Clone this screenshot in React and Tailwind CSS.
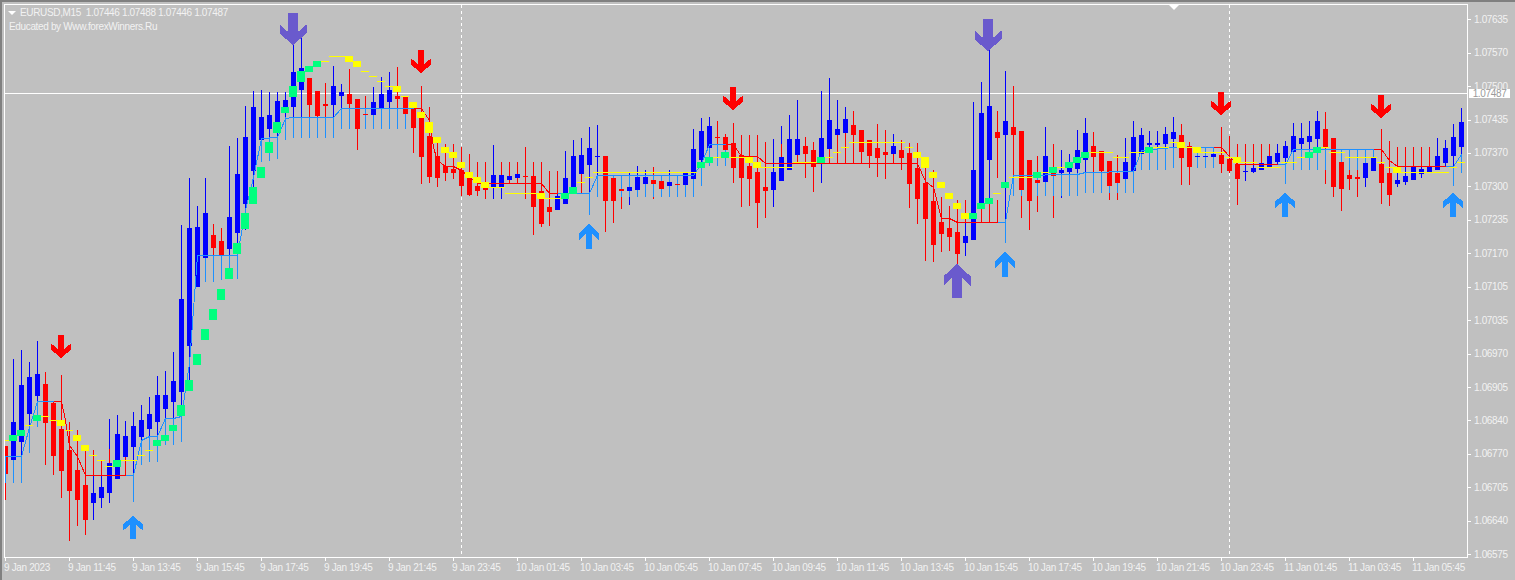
const C = [
['r',446,446,474,500,'d',456,482],['b',359,422,460,483,'d',456,483],['b',350,385,442,483,'d',456,483],['b',362,377,414,453,'d',427,453],['b',341,374,396,427,'d',401,427],
['r',372,384,423,465],['r',402,403,456,475],['r',375,429,471,498],['r',422,450,491,541],['r',430,470,500,526],
['r',445,485,520,535],['b',450,493,503,520,'r',450,475],['b',460,487,498,508,'r',460,475],['b',419,463,493,503,'r',449,475],['b',415,434,479,479,'r',460,475],
['b',421,436,457,475,'r',449,475],['b',412,426,447,502,'d',475,502],['b',405,420,437,465,'d',440,465],['b',397,414,429,462,'d',436,462],['b',376,395,422,462,'d',436,462],
['b',371,395,409,445,'d',418,445],['b',352,381,402,445,'d',418,445],['b',225,299,392,442,'d',416,442],['b',178,228,346,390],['b',206,227,287,281,'d',255,281],
['b',178,213,258,282,'d',255,282],['r',224,235,248,282,'d',255,282],['r',228,241,256,280,'d',255,280],['b',146,217,249,279,'d',255,279],['b',138,174,233,279,'d',255,279],
['b',106,137,204,230],['b',91,107,171,190],['b',90,117,140,162,'d',138,162],['b',92,115,129,161,'d',137,161],['b',92,101,122,159,'d',137,159],
['b',92,100,108,140,'d',117,140],['b',33,72,107,138,'d',117,138],['b',36,68,90,138,'d',117,138],['r',78,78,105,138,'d',117,138],['r',91,91,116,138,'d',117,138],
['r',83,104,106,138,'d',117,138],['b',66,86,105,138,'d',117,138],['b',84,92,96,129,'d',108,129],['r',69,94,104,129,'d',108,129],['r',99,99,129,150,'d',108,129],
['r',96,114,115,129,'d',108,129],['b',87,102,115,129,'d',108,129],['b',77,94,109,129,'d',108,129],['b',72,90,102,129,'d',108,129],['r',67,96,99,129,'d',108,129],
['r',97,97,114,129,'d',108,129],['r',105,108,128,153],['r',86,118,157,184],['r',107,136,177,183],['r',143,156,178,187],
['r',144,166,173,181],['r',144,169,173,179],['r',147,170,186,196],['r',154,178,195,196],['r',162,186,191,196],
['r',162,185,190,199],['b',145,175,187,199],['b',162,175,187,199,'r',162,183],['b',162,176,180,183,'r',162,183],['b',162,174,178,183,'r',162,183],
['r',147,176,177,199],['r',162,176,207,235],['r',162,191,224,227],['r',171,207,212,226],['b',171,196,210,210,'r',171,193],
['b',151,178,204,204],['b',140,156,189,189],['b',138,155,174,193,'r',174,193],['b',127,148,165,215,'d',193,215],['b',125,156,157,197,'d',175,197],
['r',156,156,201,232],['r',175,178,201,223,'d',175,197],['r',175,189,191,209,'d',175,197],['b',173,187,191,205,'d',175,197],['b',166,177,190,197,'d',175,197],
['b',170,177,184,197,'d',175,197],['r',167,180,184,199,'d',175,197],['r',175,181,189,197,'d',175,197],['b',170,182,186,197,'d',175,197],['r',175,184,185,197,'d',175,197],
['b',173,173,185,197,'d',175,197],['b',129,149,179,197,'d',175,197],['b',118,131,160,186,'d',163,186],['b',117,126,148,166,'d',144,166],['r',121,137,138,166,'d',144,166],
['r',134,137,150,166,'d',144,166],['r',123,143,168,183],['r',135,155,178,207],['r',135,166,179,206],['r',135,172,203,228],
['r',142,187,191,218],['b',139,172,190,207],['b',126,157,181,181,'r',144,163],['b',115,139,170,170],['b',100,139,155,163,'r',155,163],
['r',137,146,154,178],['r',142,150,167,192],['b',91,138,163,183],['b',78,120,149,163,'r',149,163],['b',100,129,135,163,'r',135,163],
['b',107,119,133,163,'r',133,163],['r',111,125,135,163],['r',130,130,152,163],['r',140,140,156,168],['r',124,148,158,177],
['r',130,152,155,179],['b',134,146,154,163,'r',154,163],['r',140,150,158,170],['r',143,153,184,208],['r',143,168,199,224],
['r',164,183,219,261],['r',170,201,245,262],['r',197,222,234,252],['r',206,228,237,251],['r',200,232,254,279],
['b',200,236,243,256,'r',200,222],['b',102,170,240,240,'r',200,222],['b',82,113,203,222,'r',200,222],['b',39,106,160,222,'r',200,222],['r',111,132,138,178,'r',200,222],
['b',71,121,135,243,'d',222,243],['r',86,127,135,196,'d',175,196],['r',131,131,190,218,'d',175,196],['r',160,160,201,230],['r',156,180,183,212,'d',175,196],
['b',127,156,182,196,'d',175,196],['r',144,172,176,218,'d',175,196],['b',150,170,173,198,'d',175,196],['b',154,165,172,196,'d',175,196],['b',130,150,169,196,'d',173,196],
['b',118,133,160,193,'d',172,193],['r',132,146,157,193,'d',172,193],['r',151,151,171,193,'d',172,193],['r',161,161,186,200,'d',172,193],['r',155,173,183,200,'d',172,193],
['b',138,162,179,193,'d',172,193],['b',121,137,171,193,'d',172,193],['b',128,135,154,170,'d',150,170],['b',131,143,145,170,'d',150,170],['b',131,143,145,170,'d',149,170],
['b',127,134,144,170,'d',148,170],['b',117,132,139,168,'d',147,168],['r',124,135,158,185],['r',142,146,167,185],['b',147,156,157,168,'d',147,168],
['b',147,156,157,168,'d',147,168],['b',147,154,157,168,'d',147,168],['r',127,155,164,173],['r',136,159,171,173],['r',144,164,179,205],
['b',144,171,172,181,'r',144,164],['b',144,168,172,173,'r',144,164],['b',144,163,170,170,'r',144,164],['b',144,156,167,167,'r',144,164],['b',144,153,162,164],
['b',141,146,158,184,'d',164,184],['b',123,136,152,170,'d',149,170],['b',123,138,144,170,'d',149,170],['b',121,136,142,170,'d',149,170],['b',111,121,139,170,'d',149,170],
['r',112,129,147,184,'d',149,170],['r',138,138,187,197,'d',149,170],['r',149,162,189,211,'d',149,170],['r',149,175,179,190,'d',149,170],['r',149,177,179,197,'d',149,170],
['b',149,163,178,187,'d',149,163],['b',149,158,171,171,'d',149,170],['r',129,164,183,204],['r',141,173,195,206],['b',147,180,184,187,'r',147,166],
['b',147,176,182,185,'r',147,166],['b',147,167,180,180,'r',147,166],['b',147,169,174,178,'r',147,166],['b',147,167,172,172,'r',147,166],['b',138,156,170,170],
['b',140,148,163,166],['b',124,137,156,186,'d',166,186],['b',108,122,147,173,'d',154,173],
];
const X = (i) => 5 + 8 * i;
const LINES = [
['#1e90ff',[[0,482],[0,456],[2,456],[3,427],[4,401],[6,401]]],
['#ff0000',[[6,401],[7,401],[7.5,420],[8,445],[9,456],[10,475],[15,475]]],
['#1e90ff',[[15,475],[16,475],[17,440],[18,436],[19,436],[20,418],[21,418],[22,416],[23,363],[24,255],[29,255],[30,210],[31,177],[32,138],[34,137],[35,118],[36,117],[41,117],[42,108],[51,108]]],
['#ff0000',[[51,108],[52,108],[53,120],[53.5,147],[54,160],[55,166],[56,166],[57,170],[59,183],[67,183],[68,193],[69,193]]],
['#1e90ff',[[69,193],[73,193],[74,175],[86,175],[87,163],[88,144],[90,144]]],
['#ff0000',[[90,144],[91,144],[92,156],[94,156],[95,163],[114,163],[115,181],[116,187],[117,218],[118,218],[119,222],[124,222]]],
['#1e90ff',[[124,222],[125,222],[125.5,197],[126,175],[134,174],[135,172],[141,171],[142,150],[146,147],[151,147]]],
['#ff0000',[[151,147],[152,147],[153,156],[154,164],[159,164]]],
['#1e90ff',[[159,164],[160,164],[161,149],[171,149]]],
['#ff0000',[[171,149],[172,149],[173,160],[174,166],[180,166]]],
['#1e90ff',[[180,166],[181,166],[182,154]]],
];
const GREEN = [[1,435,441],[2,430,436],[4,415,421],[14,460,467],[19,440,446],[20,435,441],[21,425,431],[22,405,416],[23,380,391],[24,354,365],[25,329,340],[26,309,320],[27,289,300],[28,268,279],[29,243,254],[30,213,229],[31,187,204],[32,167,178],[33,142,153],[34,122,133],[35,107,113],[36,86,97],[37,71,82],[38,66,72],[39,61,67],[70,193,199],[71,187,194],[87,162,168],[88,157,163],[90,152,158],[102,157,163],[121,213,219],[122,203,209],[123,198,204],[125,182,188],[129,172,178],[131,167,173],[133,162,168],[134,157,163],[135,152,158],[143,147,153],[163,152,158],[164,147,153]];
const YELLOW = [[7,420,426],[9,435,441],[10,445,451],[43,56,62],[44,61,67],[49,86,92],[51,102,108],[52,112,118],[53,122,133],[54,137,143],[55,147,153],[56,152,158],[57,162,168],[58,172,178],[59,177,183],[60,182,188],[67,193,199],[93,157,163],[94,162,168],[114,152,158],[115,157,168],[116,172,178],[117,182,188],[118,193,199],[119,203,209],[120,213,219],[147,142,148],[149,147,153],[154,157,163],[174,167,173]];
const DASH = [[0,0,440],[3,3,425],[5,5,416],[6,6,420],[8,8,430],[11,11,455],[12,12,460],[13,13,466],[15,16,460],[17,17,455],[18,18,450],[40,40,61],[41,42,56],[45,45,71],[46,46,76],[47,47,81],[48,48,86],[50,50,96],[61,62,187],[63,66,193],[68,69,198],[72,72,182],[73,73,177],[74,86,172],[89,89,157],[91,92,157],[95,98,167],[99,101,162],[103,103,157],[104,104,152],[105,105,147],[106,112,142],[113,113,147],[124,124,193],[126,128,177],[130,130,172],[132,132,167],[136,138,152],[139,140,157],[141,142,152],[144,145,147],[146,146,142],[148,148,147],[150,152,152],[153,153,157],[155,156,162],[157,159,167],[160,161,162],[162,162,157],[165,165,147],[166,167,152],[168,171,157],[172,172,162],[173,173,167],[175,180,172],[181,181,167],[182,182,162]];
const ARROWS = [
['#ff0000',61,335,358,20,1],['#ff0000',421,50,73,20,1],['#ff0000',733,87,110,20,1],['#ff0000',1221,92,115,20,1],['#ff0000',1381,95,118,20,1],
['#6a5acd',293,13,45,27,1],['#6a5acd',988,19,51,27,1],['#6a5acd',957,264,298,27,0],
['#1e90ff',133,516,539,20,0],['#1e90ff',589,224,249,20,0],['#1e90ff',1005,252,277,20,0],['#1e90ff',1285,193,217,20,0],['#1e90ff',1453,193,217,20,0],
];
function arrowPts(cx, a, b, w, down) {
  const h = b - a;
  const P = [[-0.17,0],[0.17,0],[0.17,0.6],[0.5,0.36],[0.5,0.64],[0,1],[-0.5,0.64],[-0.5,0.36],[-0.17,0.6]];
  return P.map(([px,py]) => `${cx + px * w},${down ? a + py * h : b - py * h}`).join(' ');
}
const EX = { d: '#1e90ff', r: '#ff0000' };
const COL = { b: '#0000ff', r: '#ff0000' };
function Chart() {
  return (
    <svg className="block h-[552px] w-[1462px]" viewBox="5 5 1462 552" shapeRendering="crispEdges">
      <line x1="5" x2="1467" y1="93.5" y2="93.5" stroke="#fff" strokeWidth="1" />
      <line x1="461.5" x2="461.5" y1="5" y2="557" stroke="#fff" strokeDasharray="3 3" />
      <line x1="1229.5" x2="1229.5" y1="5" y2="557" stroke="#fff" strokeDasharray="3 3" />
      {C.map((c, i) => (
        <g key={i}>
          <rect x={X(i)} y={c[1]} width="1" height={c[4] - c[1]} fill={COL[c[0]]} />
          {c[5] && <rect x={X(i)} y={c[6]} width="1" height={c[7] - c[6]} fill={EX[c[5]]} />}
          <rect x={X(i) - 2} y={c[2]} width="5" height={Math.max(c[3] - c[2], 1)} fill={COL[c[0]]} />
        </g>
      ))}
      {LINES.map(([col, pts], k) => (
        <polyline key={k} fill="none" stroke={col} strokeWidth="1" points={pts.map(([i, y]) => `${X(i) + 0.5},${y + 0.5}`).join(' ')} />
      ))}
      {DASH.map(([a, b, y], k) => (
        <rect key={k} x={X(a) - 4} y={y} width={(b - a + 1) * 8} height="1" fill="#ffff00" />
      ))}
      {YELLOW.map(([i, a, b], k) => (
        <rect key={k} x={X(i) - 4} y={a} width="8" height={b - a} fill="#ffff00" />
      ))}
      {GREEN.map(([i, a, b], k) => (
        <rect key={k} x={X(i) - 4} y={a} width="8" height={b - a} fill="#00ff7f" />
      ))}
      {ARROWS.map(([col, cx, a, b, w, d], k) => (
        <polygon key={k} fill={col} points={arrowPts(cx, a, b, w, d)} />
      ))}
    </svg>
  );
}
const PRICES = ['1.07635','1.07570','1.07500','1.07435','1.07370','1.07300','1.07235','1.07170','1.07105','1.07035','1.06970','1.06905','1.06840','1.06770','1.06705','1.06640','1.06575'];
const TIMES = ['9 Jan 2023','9 Jan 11:45','9 Jan 13:45','9 Jan 15:45','9 Jan 17:45','9 Jan 19:45','9 Jan 21:45','9 Jan 23:45','10 Jan 01:45','10 Jan 03:45','10 Jan 05:45','10 Jan 07:45','10 Jan 09:45','10 Jan 11:45','10 Jan 13:45','10 Jan 15:45','10 Jan 17:45','10 Jan 19:45','10 Jan 21:45','10 Jan 23:45','11 Jan 01:45','11 Jan 03:45','11 Jan 05:45'];
export default function App() {
  return (
    <div className="flex h-[580px] w-[1515px] flex-col overflow-hidden border-t-2 border-l-2 border-[#808080] bg-[#c0c0c0] pl-[2px] font-['Liberation_Sans',sans-serif] text-[10px] leading-none tracking-[-0.35px] text-[#f2f2f2]">
      <div className="flex h-[556px] shrink-0">
        <div className="relative mt-[2px] shrink-0 self-start border border-white">
          <Chart />
          <div className="absolute top-[3px] left-[3px] flex flex-col gap-[4px] whitespace-pre">
            <div className="flex items-center gap-[4px]">
              <span className="h-0 w-0 border-x-[4px] border-t-[4px] border-x-transparent border-t-white" />
              <span>EURUSD,M15  1.07446 1.07488 1.07446 1.07487</span>
            </div>
            <span className="ml-px">Educated by Www.forexWinners.Ru</span>
          </div>
          <div className="absolute top-0 left-[1164px] h-0 w-0 border-x-[5px] border-t-[5px] border-x-transparent border-t-white" />
          <div className="absolute top-[84px] right-[-43px] flex h-[9px] w-[41px] items-center justify-center bg-white text-[#9a9a9a]">1.07487</div>
        </div>
        <div className="mt-px flex flex-col">
          {PRICES.map((p) => (
            <div key={p} className="flex h-[33.44px] shrink-0 items-center gap-[3px]">
              <span className="h-px w-[3px] bg-white" />
              <span>{p}</span>
            </div>
          ))}
        </div>
      </div>
      <div className="ml-[1px] flex">
        {TIMES.map((t) => (
          <div key={t} className="flex w-[64px] shrink-0 flex-col">
            <span className="h-[3px] w-px bg-white" />
            <span className="-ml-px mt-[2px] whitespace-nowrap">{t}</span>
          </div>
        ))}
      </div>
    </div>
  );
}
